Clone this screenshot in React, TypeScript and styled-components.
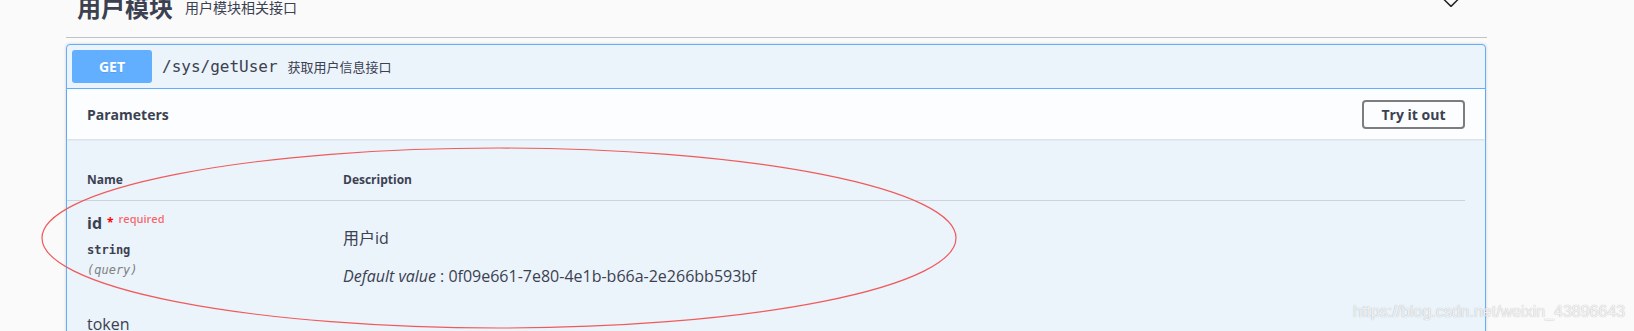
import * as React from 'react'
import styled, { createGlobalStyle } from 'styled-components'

const GlobalStyle = createGlobalStyle`
  html, body {
    margin: 0;
    padding: 0;
    background: #fafafa;
    font-family: 'Open Sans', 'Noto Sans CJK SC', sans-serif;
    color: #3b4151;
  }
`

const cjk = `'Open Sans', 'Noto Sans CJK SC', sans-serif`
const mono = `'DejaVu Sans Mono', 'Liberation Mono', 'Noto Sans CJK SC', monospace`

const Page = styled.div`
  position: relative;
  width: 1634px;
  height: 331px;
  overflow: hidden;
  background: #fafafa;
`

const TagSection = styled.div`
  margin-left: 66px;
  width: 1421px;
`

const TagHeader = styled.div`
  display: flex;
  align-items: center;
  margin-top: -20px;
  padding: 10px 26px 11px 11px;
  border-bottom: 1px solid rgba(59, 65, 81, 0.3);
`

const TagTitle = styled.span`
  font-family: ${cjk};
  font-size: 24px;
  font-weight: 700;
  line-height: 36px;
  color: #3b4151;
`

const TagDesc = styled.small`
  flex: 1;
  margin-left: 12px;
  margin-top: -3px;
  font-family: ${cjk};
  font-size: 14px;
  color: #3b4151;
`

const Chevron = styled.svg`
  align-self: flex-start;
  width: 20px;
  height: 20px;
  margin-top: 2px;
  fill: #222;
`

const Opblock = styled.div`
  margin-top: 6px;
  width: 1420px;
  box-sizing: border-box;
  border: 1px solid #61affe;
  border-radius: 4px;
  background: #ebf3fb;
  box-shadow: 0 0 3px rgba(0, 0, 0, 0.19);
`

const Summary = styled.div`
  display: flex;
  align-items: center;
  padding: 5px;
  border-bottom: 1px solid #61affe;
`

const Method = styled.span`
  display: flex;
  align-items: center;
  justify-content: center;
  width: 80px;
  height: 33px;
  border-radius: 3px;
  background: #61affe;
  color: #fff;
  font-family: 'Open Sans', sans-serif;
  font-size: 14px;
  font-weight: 700;
  text-shadow: 0 1px 0 rgba(0, 0, 0, 0.1);
`

const Path = styled.span`
  padding: 0 10px;
  font-family: ${mono};
  font-size: 16px;
  color: #3b4151;
`

const SummaryDesc = styled.span`
  font-family: ${cjk};
  font-size: 13px;
  color: #3b4151;
`

const SectionHeader = styled.div`
  display: flex;
  align-items: center;
  justify-content: space-between;
  min-height: 50px;
  box-sizing: border-box;
  padding: 8px 20px;
  background: rgba(255, 255, 255, 0.8);
  box-shadow: 0 1px 2px rgba(0, 0, 0, 0.1);
`

const SectionTitle = styled.h4`
  margin: 0;
  font-family: 'Open Sans', sans-serif;
  font-size: 14px;
  font-weight: 700;
  color: #3b4151;
`

const TryButton = styled.button`
  width: 103px;
  height: 29px;
  box-sizing: border-box;
  border: 2px solid #7d7d7d;
  border-radius: 4px;
  background: transparent;
  font-family: 'Open Sans', sans-serif;
  font-size: 14px;
  font-weight: 700;
  color: #3b4151;
`

const TableContainer = styled.div`
  padding: 20px 20px 0 0;
`

const HeadRow = styled.div`
  display: grid;
  grid-template-columns: 276px 1fr;
  border-bottom: 1px solid #cdd3dc;
`

const HeadCell = styled.div<{ first?: boolean }>`
  padding: 12px 0 12px ${(p) => (p.first ? '20px' : '0')};
  font-family: 'Open Sans', sans-serif;
  font-size: 12px;
  font-weight: 700;
  line-height: 17px;
  color: #3b4151;
`

const ParamRow = styled.div`
  display: grid;
  grid-template-columns: 276px 1fr;
  padding: 10px 0 15px;
`

const NameCell = styled.div`
  padding-left: 20px;
`

const ParamName = styled.div<{ required?: boolean }>`
  font-family: 'Open Sans', sans-serif;
  font-size: 16px;
  font-weight: ${(p) => (p.required ? 700 : 400)};
  line-height: 24px;
  color: #3b4151;
`

const Star = styled.span`
  position: relative;
  top: -2px;
  margin-left: 5px;
  font-size: 12px;
  color: #ff0000;
`

const Required = styled.span`
  position: relative;
  top: -6px;
  margin-left: 5px;
  font-size: 11px;
  font-weight: 600;
  color: rgba(255, 0, 0, 0.6);
`

const ParamType = styled.div`
  margin-top: 5px;
  font-family: ${mono};
  font-size: 12px;
  font-weight: 700;
  line-height: 16px;
  color: #3b4151;
`

const ParamIn = styled.div`
  margin-top: 4px;
  font-family: ${mono};
  font-size: 12px;
  font-style: italic;
  line-height: 16px;
  color: #808080;
`

const DescCell = styled.div`
  padding-top: 16px;
  font-family: ${cjk};
  font-size: 16px;
  line-height: 22px;
  color: #3b4151;
`

const DescLine = styled.div`
  & + & {
    margin-top: 16px;
  }
`

const Em = styled.i`
  margin-right: 4px;
`

const Annotation = styled.svg`
  position: absolute;
  left: 0;
  top: 0;
  pointer-events: none;
`

const Watermark = styled.div`
  position: absolute;
  left: 1353px;
  top: 302px;
  font-family: 'Liberation Sans', Arial, sans-serif;
  font-size: 16px;
  line-height: 20px;
  color: rgba(255, 255, 255, 0.85);
  text-shadow: 0 0 1px rgba(0, 0, 0, 0.35);
  pointer-events: none;
`

export default function App() {
  return (
    <Page>
      <GlobalStyle />
      <TagSection>
        <TagHeader>
          <TagTitle>用户模块</TagTitle>
          <TagDesc>用户模块相关接口</TagDesc>
          <Chevron viewBox='0 0 20 20'>
            <path d='M17.418 6.109c.272-.268.709-.268.979 0s.271.701 0 .969l-7.908 7.83c-.27.268-.707.268-.979 0l-7.908-7.83c-.27-.268-.27-.701 0-.969.271-.268.709-.268.979 0L10 13.25l7.418-7.141z' />
          </Chevron>
        </TagHeader>
        <Opblock>
          <Summary>
            <Method>GET</Method>
            <Path>/sys/getUser</Path>
            <SummaryDesc>获取用户信息接口</SummaryDesc>
          </Summary>
          <SectionHeader>
            <SectionTitle>Parameters</SectionTitle>
            <TryButton>Try it out</TryButton>
          </SectionHeader>
          <TableContainer>
            <HeadRow>
              <HeadCell first>Name</HeadCell>
              <HeadCell>Description</HeadCell>
            </HeadRow>
            <ParamRow>
              <NameCell>
                <ParamName required>
                  id<Star>*</Star>
                  <Required>required</Required>
                </ParamName>
                <ParamType>string</ParamType>
                <ParamIn>(query)</ParamIn>
              </NameCell>
              <DescCell>
                <DescLine>用户id</DescLine>
                <DescLine>
                  <Em>Default value</Em>: 0f09e661-7e80-4e1b-b66a-2e266bb593bf
                </DescLine>
              </DescCell>
            </ParamRow>
            <ParamRow>
              <NameCell>
                <ParamName>token</ParamName>
              </NameCell>
              <DescCell />
            </ParamRow>
          </TableContainer>
        </Opblock>
      </TagSection>
      <Annotation width='1634' height='331'>
        <ellipse cx='499' cy='238' rx='457' ry='90' fill='none' stroke='#f05a5a' strokeWidth='1.2' />
      </Annotation>
      <Watermark>https://blog.csdn.net/weixin_43896643</Watermark>
    </Page>
  )
}
